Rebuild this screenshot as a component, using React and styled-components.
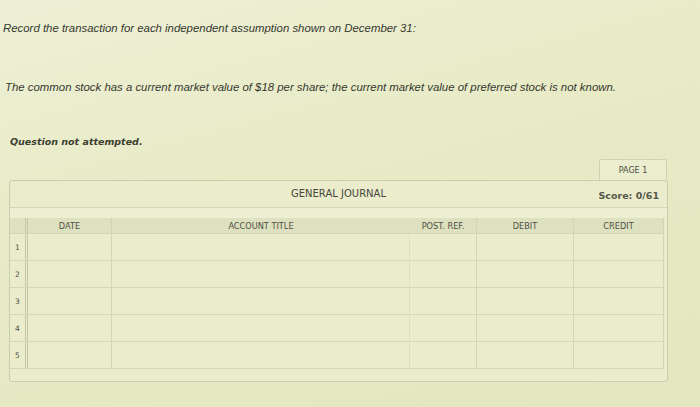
import React from 'react';
import styled, { createGlobalStyle } from 'styled-components';

const GlobalStyle = createGlobalStyle`
  html, body {
    margin: 0;
    padding: 0;
  }
  body {
    width: 700px;
    height: 407px;
    overflow: hidden;
    background: linear-gradient(165deg, #eef0d6 0%, #e8ebc6 40%, #e3e7bf 100%);
  }
`;

const Page = styled.div`
  width: 700px;
  height: 407px;
  box-sizing: border-box;
  padding: 21px 0 0 3px;
  font-family: "Liberation Sans", Arial, sans-serif;
  color: #36382f;
`;

const Prompt = styled.p`
  margin: ${(p) => p.gap}px 0 0 ${(p) => p.indent}px;
  font-style: italic;
  font-size: 11.4px;
  line-height: 14px;
`;

const Status = styled.p`
  margin: 41px 0 0 7px;
  font-family: "DejaVu Sans", Verdana, sans-serif;
  font-weight: bold;
  font-style: italic;
  font-size: 9.5px;
  line-height: 14px;
  color: #3d3f31;
`;

const Journal = styled.section`
  margin: 10px 0 0 6px;
  width: 659px;
  font-family: "DejaVu Sans", Verdana, sans-serif;
  color: #505248;
`;

const TabRow = styled.div`
  display: flex;
  justify-content: flex-end;
  padding-right: 1px;
`;

const PageTab = styled.div`
  width: 68px;
  height: 21px;
  box-sizing: border-box;
  border: 1px solid #cfd2b6;
  border-bottom: none;
  border-radius: 2px 2px 0 0;
  display: flex;
  align-items: center;
  justify-content: center;
  font-size: 8px;
  color: #4b4d42;
  background: #ebedcf;
`;

const Box = styled.div`
  border: 1px solid #c9ccae;
  border-radius: 3px;
  background: #eaeccb;
  padding-bottom: 12px;
`;

const Header = styled.div`
  display: grid;
  grid-template-columns: 1fr auto 1fr;
  align-items: center;
  height: 26px;
  border-bottom: 1px solid #d3d6ba;
`;

const Title = styled.div`
  grid-column: 2;
  font-size: 10px;
  color: #46483d;
  margin-top: -1px;
`;

const Score = styled.div`
  justify-self: end;
  padding-right: 8px;
  font-size: 9.5px;
  font-weight: bold;
  color: #55574b;
  margin-top: 3px;
`;

const Spacer = styled.div`
  height: 10px;
  background: #edefd3;
`;

const Grid = styled.div`
  display: grid;
  grid-template-columns: 18px 84px 298px 67px 97px 90px;
  margin-right: 3px;
`;

const HeadCell = styled.div`
  height: 15px;
  display: flex;
  align-items: center;
  justify-content: center;
  font-size: 8.2px;
  color: #4e5046;
  background: #dee1bf;
  border-right: ${(p) => (p.first ? '3px double #c4c7a9' : p.line ? '1px solid #d0d3b5' : 'none')};
  border-bottom: 1px solid #d3d6b9;
`;

const Cell = styled.div`
  height: 26px;
  display: flex;
  align-items: center;
  justify-content: center;
  font-size: 7.5px;
  color: #4f5145;
  border-bottom: 1px solid #d4d7ba;
  border-right: ${(p) => (p.first ? '3px double #c4c7a9' : p.faint ? '1px solid #dcdfc3' : '1px solid #d2d5b8')};
`;

const columns = [
  { label: '', first: true },
  { label: 'DATE', line: true },
  { label: 'ACCOUNT TITLE', faint: true },
  { label: 'POST. REF.', line: true },
  { label: 'DEBIT', line: true },
  { label: 'CREDIT', line: true },
];

const rows = [1, 2, 3, 4, 5];

export default function App() {
  return (
    <>
      <GlobalStyle />
      <Page>
        <Prompt gap={0} indent={0}>
          Record the transaction for each independent assumption shown on December 31:
        </Prompt>
        <Prompt gap={45} indent={2}>
          The common stock has a current market value of $18 per share; the current market value of preferred stock is not known.
        </Prompt>
        <Status>Question not attempted.</Status>
        <Journal>
          <TabRow>
            <PageTab>PAGE 1</PageTab>
          </TabRow>
          <Box>
            <Header>
              <Title>GENERAL JOURNAL</Title>
              <Score>Score: 0/61</Score>
            </Header>
            <Spacer />
            <Grid>
              {columns.map((c, i) => (
                <HeadCell key={i} first={c.first} line={c.line}>
                  {c.label}
                </HeadCell>
              ))}
              {rows.map((r) =>
                columns.map((c, i) => (
                  <Cell key={`${r}-${i}`} first={c.first} faint={c.faint}>
                    {i === 0 ? r : ''}
                  </Cell>
                ))
              )}
            </Grid>
          </Box>
        </Journal>
      </Page>
    </>
  );
}
